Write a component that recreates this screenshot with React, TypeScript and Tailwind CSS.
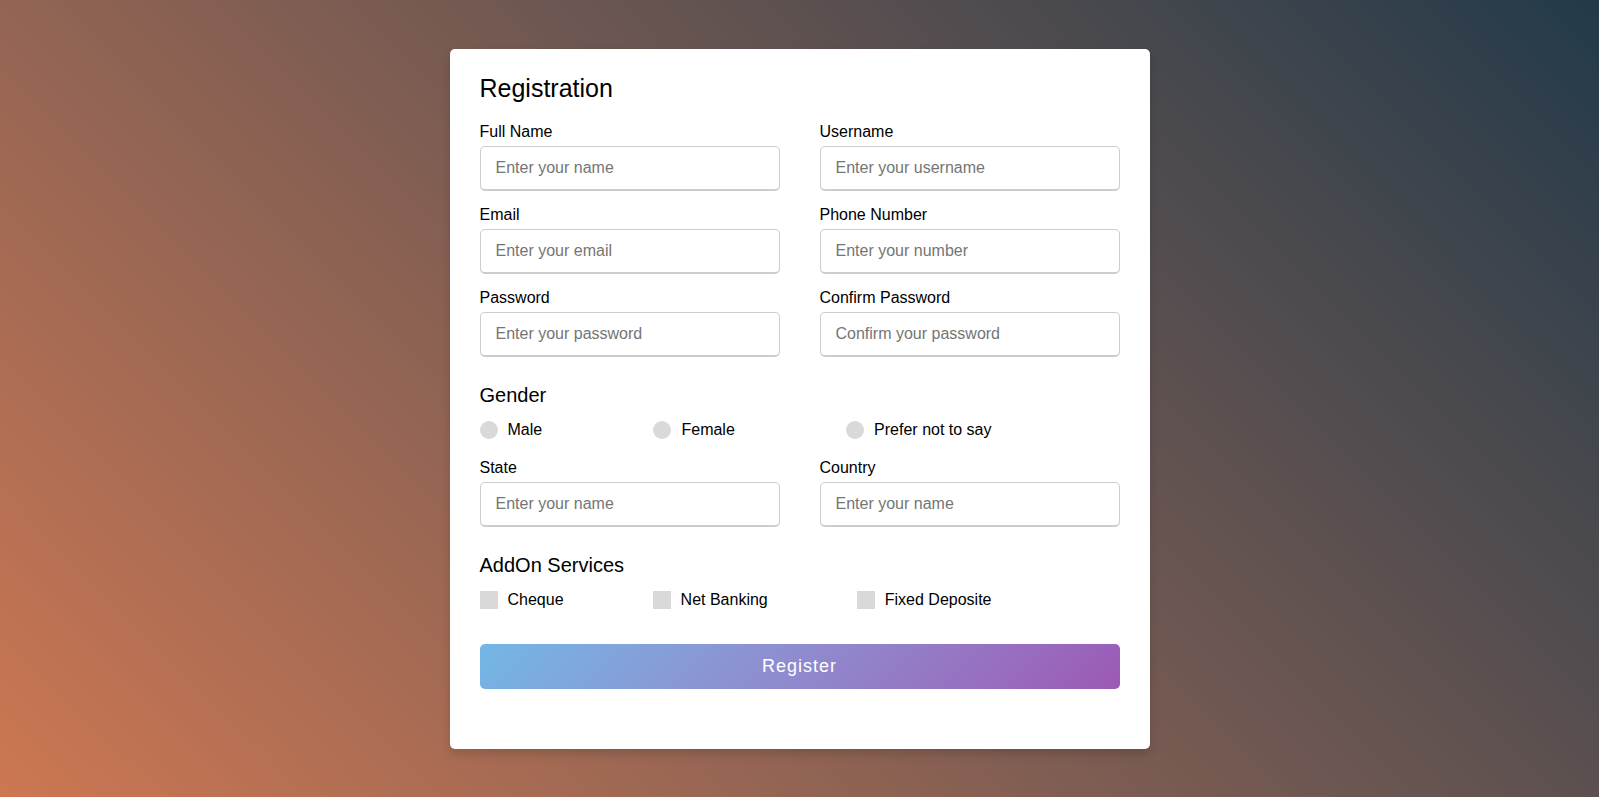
const FIELDS = [
  { label: 'Full Name', placeholder: 'Enter your name' },
  { label: 'Username', placeholder: 'Enter your username' },
  { label: 'Email', placeholder: 'Enter your email' },
  { label: 'Phone Number', placeholder: 'Enter your number' },
  { label: 'Password', placeholder: 'Enter your password' },
  { label: 'Confirm Password', placeholder: 'Confirm your password' },
];

const GENDERS = ['Male', 'Female', 'Prefer not to say'];
const SERVICES = ['Cheque', 'Net Banking', 'Fixed Deposite'];

function Field({ label, placeholder }: { label: string; placeholder: string }) {
  return (
    <div className="mb-[15px] w-[calc(50%-20px)]">
      <span className="mb-[5px] block text-[16px] leading-[18px] text-black">{label}</span>
      <input
        type="text"
        placeholder={placeholder}
        className="h-[45px] w-full rounded-[5px] border border-b-2 border-[#ccc] pl-[15px] text-[16px] text-black placeholder:text-[#757575] outline-none"
      />
    </div>
  );
}

export default function App() {
  return (
    <div
      className="flex min-h-screen w-full items-center justify-center bg-linear-45 from-[#cd7752] to-[#223a49] p-[10px]"
      style={{ fontFamily: '"Liberation Sans", Arial, sans-serif' }}
    >
      <div className="w-full max-w-[700px] rounded-[5px] bg-white px-[30px] py-[25px] shadow-[0_5px_10px_rgba(0,0,0,0.15)]">
        <h1 className="text-[25px] leading-[29px] text-black">Registration</h1>

        <form onSubmit={(e) => e.preventDefault()}>
          {/* Text inputs */}
          <div className="mt-[20px] mb-[12px] flex flex-wrap justify-between">
            {FIELDS.map((f) => (
              <Field key={f.label} {...f} />
            ))}
          </div>

          {/* Gender */}
          <div>
            <span className="block text-[20px] leading-[23px] text-black">Gender</span>
            <div className="mt-[14px] flex w-[80%] justify-between">
              {GENDERS.map((g) => (
                <label key={g} className="flex items-center">
                  <span className="mr-[10px] h-[18px] w-[18px] rounded-full bg-[#d9d9d9]" />
                  <span className="text-[16px] leading-[18px] text-black">{g}</span>
                </label>
              ))}
            </div>
          </div>

          <div className="mt-[20px] mb-[12px] flex flex-wrap justify-between">
            <Field label="State" placeholder="Enter your name" />
            <Field label="Country" placeholder="Enter your name" />
          </div>

          {/* AddOn services */}
          <div>
            <span className="block text-[20px] leading-[23px] text-black">AddOn Services</span>
            <div className="mt-[14px] flex w-[80%] justify-between">
              {SERVICES.map((s) => (
                <label key={s} className="flex items-center">
                  <span className="mr-[10px] h-[18px] w-[18px] bg-[#d9d9d9]" />
                  <span className="text-[16px] leading-[18px] text-black">{s}</span>
                </label>
              ))}
            </div>
          </div>

          <button
            type="submit"
            className="mt-[35px] mb-[35px] h-[45px] w-full rounded-[5px] bg-linear-135 from-[#71b7e6] to-[#9b59b6] text-[18px] tracking-[1px] text-white"
          >
            Register
          </button>
        </form>
      </div>
    </div>
  );
}
